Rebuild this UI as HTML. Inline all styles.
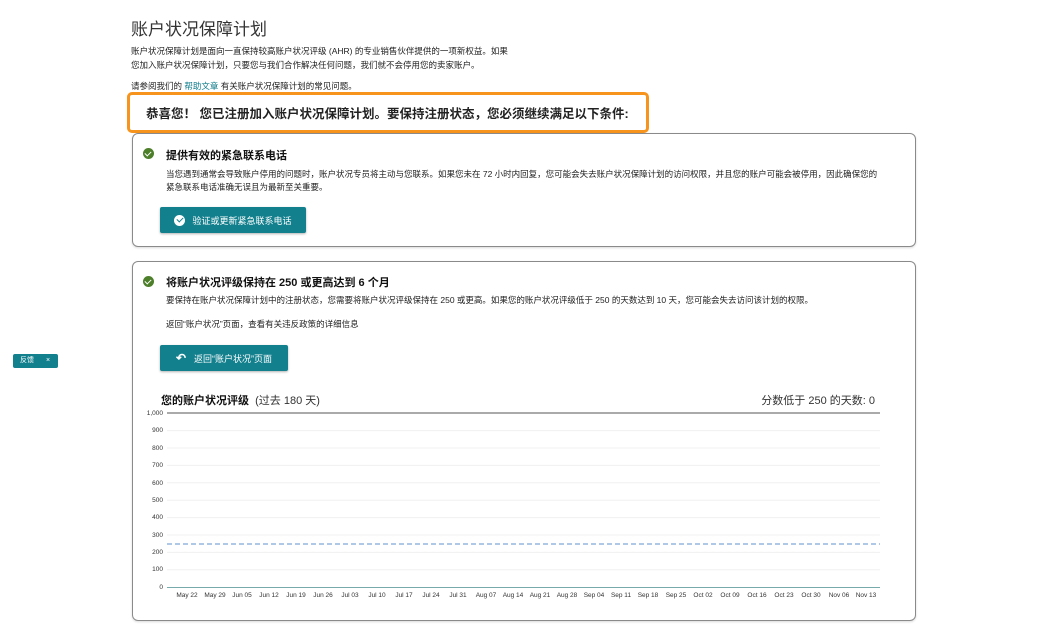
<!DOCTYPE html>
<html><head><meta charset="utf-8"><style>
body{margin:0;background:#fff;font-family:"Liberation Sans","Noto Sans CJK SC",sans-serif;color:#111;width:1047px;height:634px;overflow:hidden;position:relative}
.a{position:absolute;white-space:nowrap}
.s{font-size:8.5px;color:#222}
.card{position:absolute;border:1px solid #8a8a8a;border-radius:6px;left:132px;width:782px;box-shadow:0 1px 2px rgba(0,0,0,.15)}
.btn{position:absolute;background:#13808e;color:#fff;font-size:9px;border-radius:2px;display:flex;align-items:center;justify-content:center;box-shadow:0 1px 2px rgba(0,0,0,.3)}
.chk{position:absolute;width:11px;height:11px;border-radius:50%;background:#4d7f2a}
.chk:after{content:"";position:absolute;left:3px;top:2px;width:3px;height:5px;border:solid #fff;border-width:0 1.5px 1.5px 0;transform:rotate(45deg)}
.wchk{position:relative;display:inline-block;width:11px;height:11px;border-radius:50%;background:#fff;margin-right:7px}
.wchk:after{content:"";position:absolute;left:3.5px;top:1.5px;width:3px;height:5px;border:solid #13808e;border-width:0 1.5px 1.5px 0;transform:rotate(45deg)}
h3{margin:0;font-size:11px;font-weight:bold}
</style></head><body>
<div class="a" style="left:131px;top:15px;font-size:17px;color:#333">账户状况保障计划</div>
<div class="a s" style="left:131px;top:44px;line-height:14px">账户状况保障计划是面向一直保持较高账户状况评级 (AHR) 的专业销售伙伴提供的一项新权益。如果<br>您加入账户状况保障计划，只要您与我们合作解决任何问题，我们就不会停用您的卖家账户。</div>
<div class="a s" style="left:131px;top:80px">请参阅我们的 <span style="color:#0f7d8c">帮助文章</span> 有关账户状况保障计划的常见问题。</div>
<div class="a" style="left:127px;top:92px;width:516px;height:35px;border:3px solid #f7941d;border-radius:5px"></div>
<div class="a" style="left:146px;top:103px;font-size:12.5px;font-weight:bold;color:#222">恭喜您！ 您已注册加入账户状况保障计划。要保持注册状态，您必须继续满足以下条件:</div>

<div class="card" style="top:133px;height:112px">
<div class="chk" style="left:10px;top:14px"></div>
<h3 class="a" style="left:33px;top:13px">提供有效的紧急联系电话</h3>
<div class="a s" style="left:33px;top:34px;line-height:13px">当您遇到通常会导致账户停用的问题时，账户状况专员将主动与您联系。如果您未在 72 小时内回复，您可能会失去账户状况保障计划的访问权限，并且您的账户可能会被停用，因此确保您的<br>紧急联系电话准确无误且为最新至关重要。</div>
<div class="btn" style="left:27px;top:73px;width:146px;height:26px"><span class="wchk"></span>验证或更新紧急联系电话</div>
</div>

<div class="card" style="top:261px;height:358px">
<div class="chk" style="left:10px;top:14px"></div>
<h3 class="a" style="left:33px;top:12px">将账户状况评级保持在 250 或更高达到 6 个月</h3>
<div class="a s" style="left:33px;top:32px">要保持在账户状况保障计划中的注册状态，您需要将账户状况评级保持在 250 或更高。如果您的账户状况评级低于 250 的天数达到 10 天，您可能会失去访问该计划的权限。</div>
<div class="a s" style="left:33px;top:56px">返回“账户状况”页面，查看有关违反政策的详细信息</div>
<div class="btn" style="left:27px;top:83px;width:128px;height:26px"><span style="margin-right:8px;font-size:12px;font-weight:bold">↶</span>返回“账户状况”页面</div>
<div class="a" style="left:28px;top:130px;font-size:11px"><b>您的账户状况评级</b> <span style="color:#333">&nbsp;(过去 180 天)</span></div>
<div class="a" style="right:40px;top:130px;font-size:11px;color:#333">分数低于 250 的天数: 0</div>
</div>

<svg class="a" style="left:0;top:0" width="1047" height="634">
<g font-size="6.5" fill="#333" text-anchor="end" font-family="Liberation Sans">
<text x="163" y="415">1,000</text><text x="163" y="432">900</text><text x="163" y="450">800</text><text x="163" y="467">700</text><text x="163" y="485">600</text><text x="163" y="502">500</text><text x="163" y="519">400</text><text x="163" y="537">300</text><text x="163" y="554">200</text><text x="163" y="571">100</text><text x="163" y="589">0</text>
</g>
<g stroke="#f0f0f0"><line x1="167" x2="880" y1="430.6" y2="430.6"/><line x1="167" x2="880" y1="448" y2="448"/><line x1="167" x2="880" y1="465.4" y2="465.4"/><line x1="167" x2="880" y1="482.8" y2="482.8"/><line x1="167" x2="880" y1="500.2" y2="500.2"/><line x1="167" x2="880" y1="517.6" y2="517.6"/><line x1="167" x2="880" y1="535" y2="535"/><line x1="167" x2="880" y1="552.4" y2="552.4"/><line x1="167" x2="880" y1="569.8" y2="569.8"/></g>
<line x1="167" x2="880" y1="413" y2="413" stroke="#777" stroke-width="1.2"/>
<line x1="167" x2="880" y1="587.5" y2="587.5" stroke="#7aa" stroke-width="1"/>
<line x1="167" x2="880" y1="544" y2="544" stroke="#7ea6d8" stroke-width="1.2" stroke-dasharray="5,3"/>
<g font-size="6.5" fill="#333" text-anchor="middle" font-family="Liberation Sans">
<text x="187" y="597">May 22</text><text x="215" y="597">May 29</text><text x="242" y="597">Jun 05</text><text x="269" y="597">Jun 12</text><text x="296" y="597">Jun 19</text><text x="323" y="597">Jun 26</text><text x="350" y="597">Jul 03</text><text x="377" y="597">Jul 10</text><text x="404" y="597">Jul 17</text><text x="431" y="597">Jul 24</text><text x="458" y="597">Jul 31</text><text x="486" y="597">Aug 07</text><text x="513" y="597">Aug 14</text><text x="540" y="597">Aug 21</text><text x="567" y="597">Aug 28</text><text x="594" y="597">Sep 04</text><text x="621" y="597">Sep 11</text><text x="648" y="597">Sep 18</text><text x="676" y="597">Sep 25</text><text x="703" y="597">Oct 02</text><text x="730" y="597">Oct 09</text><text x="757" y="597">Oct 16</text><text x="784" y="597">Oct 23</text><text x="811" y="597">Oct 30</text><text x="839" y="597">Nov 06</text><text x="866" y="597">Nov 13</text>
</g>
</svg>

<div class="a" style="left:13px;top:354px;width:45px;height:14px;background:#13808e;border-radius:2px;color:#fff;font-size:7px;line-height:14px"><span style="margin-left:7px">反馈</span><span style="margin-left:12px">×</span></div>
</body></html>
